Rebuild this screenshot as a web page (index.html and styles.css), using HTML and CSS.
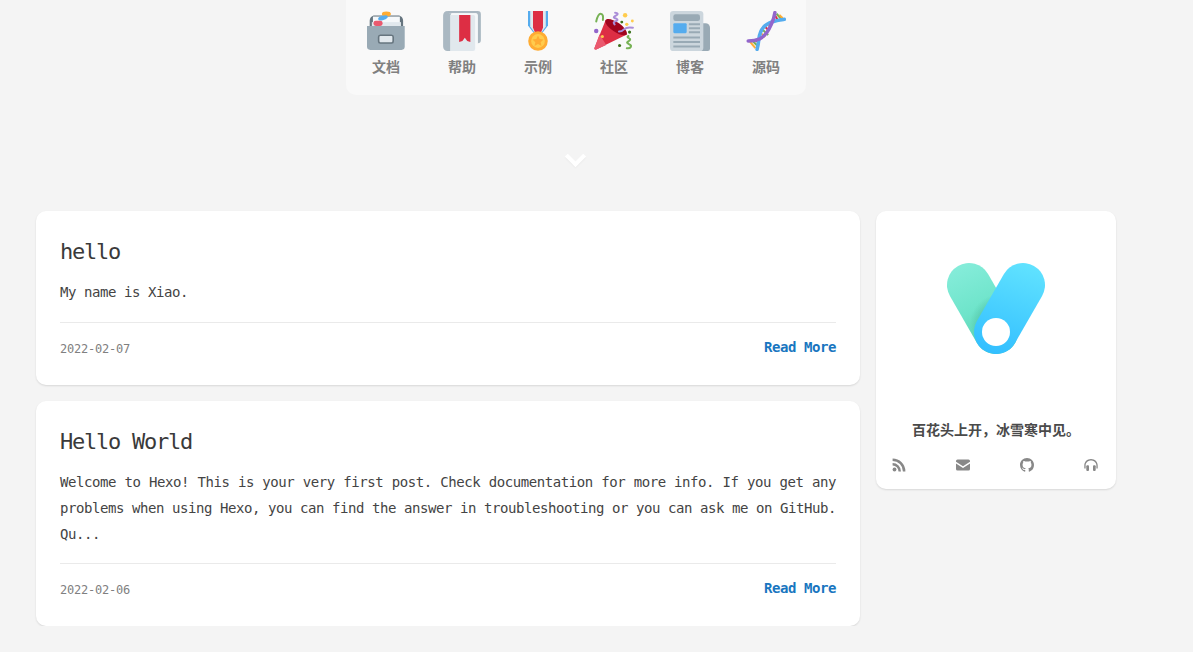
FILE: index.html
```html
<!DOCTYPE html>
<html lang="zh">
<head>
<meta charset="utf-8">
<title>Hexo</title>
<link rel="stylesheet" href="styles.css">
</head>
<body>
<header class="top">
  <nav class="dock">
    <a class="dock-item">
      <svg class="dock-icon" viewBox="0 0 36 36"><g transform="translate(.9 0) scale(.97 1)"><path fill="#66757F" d="M2.500 16V9c0-3 2-5 4.500-5h22c2.500 0 4.500 2 4.500 5v7z"/><path fill="#F5F8FA" d="M5.500 5h25v11h-25z"/><path fill="#E1E8ED" d="M4.500 10h27v6h-27z"/><ellipse cx="18" cy="2.600" rx="4.200" ry="2.200" fill="#FFAC33"/><ellipse cx="14.800" cy="6.200" rx="4.600" ry="1.900" fill="#55ACEE" transform="rotate(-15 14.800 6.200)"/><rect x="6" y="8.700" width="8.500" height="4.800" rx="2.200" fill="#EA596E"/><path fill="#99AAB5" d="M0 13.500h35V32a3 3 0 0 1-3 3H3a3 3 0 0 1-3-3z"/><rect x="10.800" y="21.800" width="13.500" height="7" rx="1.500" fill="#E1E8ED" stroke="#66757F" stroke-width="1.500"/></g></svg>
      <span class="dock-label">文档</span>
    </a>
    <a class="dock-item">
      <svg class="dock-icon" viewBox="0 0 36 36"><g transform="translate(1 0) scale(.944 1)"><path fill="#AAB8C2" d="M4 0h29a3 3 0 0 1 3 3v23a3 3 0 0 1-3 3V4a2 2 0 0 0-2-2H4z"/><path fill="#F5F8FA" d="M6 2h25a2 2 0 0 1 2 2v25h-2V36H6z"/><path fill="#AAB8C2" d="M4 0a4 4 0 0 0-4 4v28a4 4 0 0 0 4 4h3V3.500L8 2H6z"/><path fill="#E1E8ED" d="M7 3.600h22a1.500 1.500 0 0 1 1.500 1.500V34a2 2 0 0 1-2 2H7z"/><path fill="#DD2E44" d="M15.300 3.600H26v24.400l-3-1-2.300-3-2.300 3-3.100 1z"/></g></svg>
      <span class="dock-label">帮助</span>
    </a>
    <a class="dock-item">
      <svg class="dock-icon" viewBox="0 0 36 36"><path fill="#55ACEE" d="M9 0h18v13l-6 8h-6l-6-8z"/><path fill="#E1E8ED" d="M11 0h14v14l-5 7h-4l-5-7z"/><path fill="#DD2E44" d="M13.500 0h9v15l-2.500 6h-4l-2.500-6z"/><circle cx="18" cy="27" r="8.800" fill="#FFAC33"/><circle cx="18" cy="27" r="6.200" fill="#FFCC4D"/><path fill="#FFAC33" d="M18 22l1.500 3.300 3.500.4-2.600 2.400.7 3.500-3.100-1.800-3.100 1.800.7-3.500-2.600-2.400 3.500-.4z"/></svg>
      <span class="dock-label">示例</span>
    </a>
    <a class="dock-item">
      <svg class="dock-icon" viewBox="0 0 36 36"><path fill="#DD2E44" d="M10.500 8L.5 33c-.5 1.200.4 2 1.500 1.600L30 21z"/><path fill="#EA596E" d="M5 21L.5 33c-.5 1.200.4 2 1.500 1.600l9-4z"/><path fill="#A0041E" d="M10.500 8c1.500-2 7-.5 12 3s8 8 7 10c-1.200 2-7 .5-12-3S9 10 10.500 8z"/><path fill="none" stroke="#77B255" stroke-width="1.800" stroke-linecap="round" d="M2 9.500C3 5 4 2.500 6 2.500S8.500 5 8 8M31 22.500c-3 1.500 3.500 2 1 4s-3 1.500-1 3 3 1.500 2 3-2.500 1-3.500 1"/><path fill="none" stroke="#AA8DD8" stroke-width="1.800" stroke-linecap="round" d="M19 1.500c2.500 0 3 1.500 1 2.500s-3 2-1 2.500 3 1.500 1 2.500-3 1-1.500 3M35 15c-3-.5-6-.5-8 1.500s-3 2-4.500 2"/><circle cx="2" cy="18" r="2" fill="#9266CC"/><circle cx="28" cy="3.800" r="2" fill="#FFCC4D"/><circle cx="29.500" cy="12" r="1.500" fill="#FFCC4D"/><circle cx="34.500" cy="9" r="1.300" fill="#FFCC4D"/><circle cx="25" cy="10" r="1.300" fill="#3E721D"/><circle cx="32" cy="19" r="1.400" fill="#3E721D"/><circle cx="23" cy="31" r="1.400" fill="#3E721D"/><circle cx="7.500" cy="23" r="1.400" fill="#FFCC4D"/></svg>
      <span class="dock-label">社区</span>
    </a>
    <a class="dock-item">
      <svg class="dock-icon" viewBox="0 0 36 36"><path fill="#99AAB5" d="M28 11h4a4 4 0 0 1 4 4v19a2 2 0 0 1-2 2h-6z"/><rect x="0" y="0" width="30" height="36" rx="3" fill="#CCD6DD"/><rect x="3" y="3" width="24" height="6" rx="2" fill="#99AAB5"/><rect x="3" y="11" width="12" height="9" rx="1" fill="#55ACEE"/><path fill="#99AAB5" d="M17 11h10v1.800H17zM17 14.600h10v1.800H17zM17 18.200h10V20H17zM3 23h24v1.800H3zM3 27h24v1.800H3zM3 31h24v1.800H3z"/></svg>
      <span class="dock-label">博客</span>
    </a>
    <a class="dock-item">
      <svg class="dock-icon" viewBox="0 0 36 36"><g fill="none" stroke-width="1.800"><path stroke="#FFAC33" d="M3.500 27.500l5 6"/><path stroke="#77B255" d="M6 27l4.500 4.500"/><path stroke="#DD2E44" d="M8.500 26l2.500 2.500"/><path stroke="#FFAC33" d="M12.500 19l4.500 4.500"/><path stroke="#77B255" d="M14 16l6 5.500"/><path stroke="#DD2E44" d="M16.500 13.500l4.500 4.500"/><path stroke="#FFAC33" d="M19 11.500l3 3"/><path stroke="#DD2E44" d="M25.500 3l3 5"/><path stroke="#77B255" d="M27.500 2.500l4 4.500"/><path stroke="#FFAC33" d="M30 3.500l3 3"/></g><path fill="none" stroke="#55ACEE" stroke-width="3.200" stroke-linecap="round" d="M34.500 7.500C28 8.500 20 9.500 15.500 15c-3.500 4-3.500 8-4 11-.3 3-.8 6-1.500 8.500"/><path fill="none" stroke="#9266CC" stroke-width="3.200" stroke-linecap="round" d="M26 1.500c-.5 4-2 8-3.500 11-2.500 6-5.500 10-10 12.500-3.500 1.500-7 2-10.500 2"/></svg>
      <span class="dock-label">源码</span>
    </a>
  </nav>
  <div class="chevron"></div>
</header>
<main class="layout">
  <section class="posts">
    <article class="card post">
      <h2 class="post-title">hello</h2>
      <p class="post-text">My name is Xiao.</p>
      <div class="post-meta">
        <time class="post-date">2022-02-07</time>
        <a class="post-more">Read More</a>
      </div>
    </article>
    <article class="card post">
      <h2 class="post-title">Hello World</h2>
      <p class="post-text">Welcome to Hexo! This is your very first post. Check documentation for more info. If you get any problems when using Hexo, you can find the answer in troubleshooting or you can ask me on GitHub. Qu...</p>
      <div class="post-meta">
        <time class="post-date">2022-02-06</time>
        <a class="post-more">Read More</a>
      </div>
    </article>
  </section>
  <aside class="card profile">
    <svg class="logo" viewBox="0 0 100 92">
      <defs>
        <linearGradient id="g" gradientUnits="userSpaceOnUse" x1="15" y1="5" x2="50" y2="80"><stop offset="0" stop-color="#84ecd9"/><stop offset=".55" stop-color="#6ee4ca"/><stop offset="1" stop-color="#5ad0ac"/></linearGradient>
        <radialGradient id="s" gradientUnits="userSpaceOnUse" cx="54" cy="62" r="30"><stop offset=".3" stop-color="#2f9c7c" stop-opacity=".6"/><stop offset="1" stop-color="#2f9c7c" stop-opacity="0"/></radialGradient>
        <linearGradient id="b" gradientUnits="userSpaceOnUse" x1="80" y1="2" x2="50" y2="92"><stop offset="0" stop-color="#60e2ff"/><stop offset="1" stop-color="#33bfff"/></linearGradient>
      </defs>
      <path d="M23 23L50 70" stroke="url(#g)" stroke-width="44" stroke-linecap="round"/>
      <path d="M23 23L50 70" stroke="url(#s)" stroke-width="44" stroke-linecap="round"/>
      <path d="M77 23L50 70" stroke="url(#b)" stroke-width="44" stroke-linecap="round"/>
      <circle cx="50" cy="70" r="14" fill="#fff"/>
    </svg>
    <p class="motto">百花头上开，冰雪寒中见。</p>
    <div class="social">
      <svg class="social-icon" viewBox="0 0 14 14"><circle cx="2.500" cy="11.500" r="1.900"/><path d="M.6 5v2.500A5.900 5.900 0 0 1 6.500 13.400H9A8.400 8.400 0 0 0 .6 5z"/><path d="M.6.6v2.500a10.300 10.300 0 0 1 10.300 10.300h2.500A12.800 12.800 0 0 0 .6.6z"/></svg>
      <svg class="social-icon" viewBox="0 0 14 14"><path d="M0 3A1.500 1.500 0 0 1 1.500 1.500h11A1.500 1.500 0 0 1 14 3v.8L7 8.300 0 3.800z"/><path d="M0 5.400V11a1.500 1.500 0 0 0 1.500 1.500h11A1.500 1.500 0 0 0 14 11V5.400L7 9.900z"/></svg>
      <svg class="social-icon" viewBox="0 0 16 16"><path d="M8 0C3.580 0 0 3.580 0 8c0 3.540 2.290 6.530 5.470 7.590.4.070.55-.17.55-.38 0-.19-.01-.82-.01-1.490-2.010.37-2.530-.49-2.690-.94-.09-.23-.48-.94-.82-1.130-.28-.15-.68-.52-.01-.53.63-.01 1.080.58 1.230.82.720 1.210 1.870.87 2.330.66.070-.52.280-.87.510-1.070-1.780-.2-3.640-.89-3.640-3.950 0-.87.310-1.590.820-2.150-.08-.2-.36-1.020.080-2.120 0 0 .67-.21 2.200.82.640-.18 1.320-.27 2-.27.680 0 1.360.09 2 .27 1.530-1.040 2.200-.82 2.200-.82.440 1.100.160 1.920.080 2.120.510.560.820 1.270.820 2.150 0 3.070-1.870 3.750-3.650 3.950.290.25.540.730.540 1.480 0 1.070-.01 1.930-.01 2.200 0 .21.150.46.550.38A8.013 8.013 0 0 0 16 8c0-4.420-3.580-8-8-8z"/></svg>
      <svg class="social-icon" viewBox="0 0 14 14"><path d="M7 1C3.200 1 .3 3.800.3 7.400v3h1.300v-3C1.600 4.600 4 2.400 7 2.400s5.400 2.200 5.400 5v3h1.300v-3C13.700 3.800 10.800 1 7 1z"/><rect x="2.300" y="7.300" width="2.700" height="5.700" rx="1"/><rect x="9" y="7.300" width="2.700" height="5.700" rx="1"/></svg>
    </div>
  </aside>
</main>
</body>
</html>
```

FILE: styles.css
```css
* { box-sizing: border-box; }

html, body {
  margin: 0;
  padding: 0;
}

body {
  background: #f4f4f4;
  color: #444;
  font-family: "DejaVu Sans Mono", "Noto Sans CJK SC", monospace;
  overflow: hidden;
}

.top {
  display: flex;
  flex-direction: column;
  align-items: center;
  height: 211px;
  padding-right: 41px;
}

.dock {
  display: flex;
  justify-content: center;
  width: 460px;
  height: 95px;
  padding-top: 11px;
  background: #f9f9f9;
  border-radius: 0 0 10px 10px;
}

.dock-item {
  display: flex;
  flex-direction: column;
  align-items: center;
  width: 76px;
}

.dock-icon {
  display: block;
  width: 40px;
  height: 40px;
}

.dock-label {
  margin-top: 6px;
  font-family: "Liberation Sans", "Noto Sans CJK SC", sans-serif;
  font-size: 14px;
  font-weight: 700;
  line-height: 20px;
  color: #808080;
}

.chevron {
  width: 15px;
  height: 15px;
  margin: 54px 0 0 -2px;
  border-right: 4px solid #fff;
  border-bottom: 4px solid #fff;
  transform: rotate(45deg);
  box-shadow: 1px 1px 2px rgba(0, 0, 0, 0.03);
}

.layout {
  display: flex;
  align-items: flex-start;
  gap: 16px;
  padding-left: 36px;
}

.posts {
  display: flex;
  flex-direction: column;
  gap: 16px;
  width: 824px;
}

.card {
  background: #fff;
  border-radius: 10px;
  box-shadow: 0 1px 2px rgba(0, 0, 0, 0.12);
}

.post {
  padding: 25px 24px 0;
}

.post-title {
  margin: 0;
  font-size: 22px;
  font-weight: 400;
  letter-spacing: -1.24px;
  line-height: 32px;
  color: #3a3a3a;
}

.post-text {
  margin: 12.4px 0 0;
  padding-bottom: 15.6px;
  border-bottom: 1px solid #eaeaea;
  font-size: 14px;
  letter-spacing: -0.43px;
  line-height: 25.8px;
  text-align: justify;
  color: #444;
}

.post-meta {
  display: flex;
  justify-content: space-between;
  align-items: center;
  height: 48px;
  padding-top: 0.5px;
  margin-bottom: 14px;
}

.post-date {
  position: relative;
  top: 2px;
  font-size: 12px;
  letter-spacing: -0.22px;
  color: #808080;
}

.post-more {
  font-size: 14px;
  font-weight: 700;
  letter-spacing: -0.43px;
  color: #1976c0;
}

.profile {
  width: 240px;
  height: 278px;
  padding: 51px 16px 0;
  display: flex;
  flex-direction: column;
  align-items: center;
}

.logo {
  display: block;
  width: 100px;
  height: 92px;
}

.motto {
  margin: 65px 0 0;
  font-family: "Liberation Sans", "Noto Sans CJK SC", sans-serif;
  font-size: 14px;
  font-weight: 700;
  line-height: 22px;
  color: #4a4a4a;
}

.social {
  display: flex;
  gap: 50px;
  width: 100%;
  margin-top: 17px;
}

.social-icon {
  display: block;
  width: 14px;
  height: 14px;
  fill: #888;
}
```
